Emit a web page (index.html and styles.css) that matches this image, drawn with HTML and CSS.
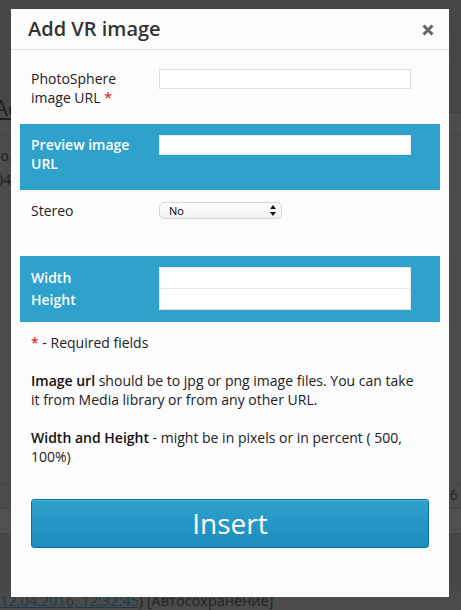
FILE: index.html
```html
<!DOCTYPE html>
<html lang="en">
<head>
<meta charset="utf-8">
<title>Add VR image</title>
<link rel="stylesheet" href="styles.css">
</head>
<body>
<div class="page">
  <div class="pg-head">
    <div class="pg-box"></div>
  </div>
  <div class="pg-titlebar">
    <span class="pg-title">Add</span>
  </div>
  <div class="pg-sep"></div>
  <div class="pg-line pg-line-1">demo.com/</div>
  <div class="pg-line pg-line-2">2016/04/</div>
  <div class="pg-spacer"></div>
  <div class="pg-row pg-row-a"><span class="pg-num">6 r</span></div>
  <div class="pg-row pg-row-b"></div>
  <div class="pg-row pg-row-c"></div>
  <div class="pg-foot"><a class="pg-link">12.04.2016, 12:32:45</a>) [Автосохранение]</div>
</div>

<div class="modal">
  <div class="modal-head">
    <h1 class="modal-title">Add VR image</h1>
    <span class="modal-close" aria-label="Close">
      <svg width="12" height="12" viewBox="0 0 12 12"><path d="M1.5 1.5 L10.5 10.5 M10.5 1.5 L1.5 10.5" stroke="#666" stroke-width="3" stroke-linecap="butt"/></svg>
    </span>
  </div>
  <div class="modal-body">
    <div class="row">
      <label class="lbl">PhotoSphere image URL <span class="req">*</span></label>
      <div class="field"><input class="inp" type="text"></div>
    </div>
    <div class="row band">
      <label class="lbl">Preview image URL</label>
      <div class="field"><input class="inp" type="text"></div>
    </div>
    <div class="row">
      <label class="lbl">Stereo</label>
      <div class="field">
        <div class="select">
          <span class="select-val">No</span>
          <svg class="select-arrows" width="6" height="11" viewBox="0 0 6 11"><path d="M3 0 L6 4 L0 4 Z M0 7 L6 7 L3 11 Z" fill="#111"/></svg>
        </div>
      </div>
    </div>
    <div class="row band">
      <div class="lbl lbl-stack"><span>Width</span><span>Height</span></div>
      <div class="field field-stack"><input class="inp inp-tall" type="text"><input class="inp inp-tall inp-second" type="text"></div>
    </div>
    <div class="notes">
      <p><span class="req">*</span> - Required fields</p>
      <p><b>Image url</b> should be to jpg or png image files. You can take it from Media library or from any other URL.</p>
      <p><b>Width and Height</b> - might be in pixels or in percent ( 500, 100%)</p>
    </div>
    <button class="insert" type="button">Insert</button>
  </div>
</div>
</body>
</html>
```

FILE: styles.css
```css
* { box-sizing: border-box; }

html, body {
  margin: 0;
  padding: 0;
}

body {
  background: #4b4b4b;
  font-family: "Open Sans", "Noto Sans", sans-serif;
  font-size: 14px;
  color: #222;
  overflow: hidden;
  height: 610px;
}

/* ---------- dimmed page behind the modal ---------- */
.page {
  color: #1c1c1c;
}
.pg-head {
  height: 113px;
  background: #474747;
  border-bottom: 1px solid #414141;
  display: flex;
  justify-content: flex-end;
  padding-top: 30px;
}
.pg-box {
  width: 8px;
  height: 30px;
  border: 1px solid #434343;
  border-right: none;
}
.pg-titlebar {
  margin-top: -18px;
  height: 35px;
  border-bottom: 1px solid #525252;
}
.pg-title {
  display: inline-block;
  margin-left: -6px;
  font-size: 22px;
  line-height: 24px;
  text-decoration: underline;
  color: #1e1e1e;
}
.pg-sep { height: 14px; }
.pg-line {
  font-size: 14px;
  line-height: 24px;
  color: #1e1e1e;
  white-space: nowrap;
}
.pg-line-1 { margin-left: -29px; }
.pg-line-2 { margin-left: -42px; }
.pg-spacer { height: 291px; }
.pg-row {
  height: 25px;
  border-top: 1px solid #444;
}
.pg-row-a {
  background: #4b4b4b;
  display: flex;
  justify-content: flex-end;
  font-size: 14px;
  line-height: 22px;
  color: #222;
}
.pg-row-b { background: #505050; }
.pg-num { margin-right: -6px; }
.pg-row-c { height: 58px; background: #474747; }
.pg-foot {
  margin-left: 0;
  font-size: 14.5px;
  line-height: 20px;
  color: #222;
  white-space: nowrap;
}
.pg-link {
  color: #1f3a4a;
  text-decoration: underline;
}

/* ---------- modal ---------- */
.modal {
  position: fixed;
  left: 11px;
  top: 9px;
  width: 438px;
  height: 588px;
  background: #fcfcfc;
}
.modal-head {
  height: 41px;
  border-bottom: 1px solid #dddddd;
  display: flex;
  align-items: center;
  justify-content: space-between;
  padding: 0 15px 0 17px;
}
.modal-title {
  margin: 0;
  font-size: 20px;
  font-weight: 600;
  color: #333;
  line-height: 40px;
}
.modal-close {
  display: flex;
  width: 12px;
  height: 12px;
  margin-top: 1px;
}

.modal-body {
  padding: 8px 9px 0;
}

.row {
  height: 66px;
  padding: 11px 11px 0;
  display: grid;
  grid-template-columns: 115px 252px;
  column-gap: 13px;
  align-items: start;
}
.band {
  background: #2ea2cc;
  color: #fff;
}
.lbl {
  line-height: 19px;
  color: #222;
}
.band .lbl {
  color: #fff;
  font-weight: 600;
}
.req { color: #e00; }

.inp {
  display: block;
  width: 252px;
  height: 20px;
  margin: 0;
  padding: 0 4px;
  border: 1px solid #dddddd;
  background: #fff;
  font: inherit;
  outline: none;
}
.band .inp { border-color: #e6e6e6; }
.inp-tall { height: 22px; }
.inp-second { margin-top: -1px; }

.lbl-stack {
  display: flex;
  flex-direction: column;
}
.lbl-stack span {
  line-height: 21.5px;
}

.select {
  margin-top: 1px;
  width: 123px;
  height: 17px;
  border: 1px solid #d6d6d6;
  border-radius: 5px;
  background: linear-gradient(#fdfdfd, #f1f1f1);
  display: flex;
  align-items: center;
  justify-content: space-between;
  padding: 0 5px 0 9px;
}
.select-val {
  font-size: 11px;
  color: #000;
  line-height: 15px;
}

.notes {
  margin-top: 11px;
  padding: 0 17px 0 11px;
}
.notes p {
  margin: 0 0 19px;
  line-height: 19px;
  color: #222;
}
.notes p:last-child { margin-bottom: 0; }
.notes b { font-weight: 600; color: #111; }

.insert {
  display: block;
  margin: 33px 11px 0;
  width: 398px;
  height: 49px;
  border: 1px solid #0074a2;
  border-radius: 3px;
  background: linear-gradient(#2ea2cc, #1e8cbe);
  box-shadow: inset 0 1px 0 rgba(120, 200, 230, 0.5);
  color: #fff;
  font-family: "Open Sans", "Noto Sans", sans-serif;
  font-size: 28px;
  line-height: 45px;
  padding: 0;
  cursor: pointer;
}
```
